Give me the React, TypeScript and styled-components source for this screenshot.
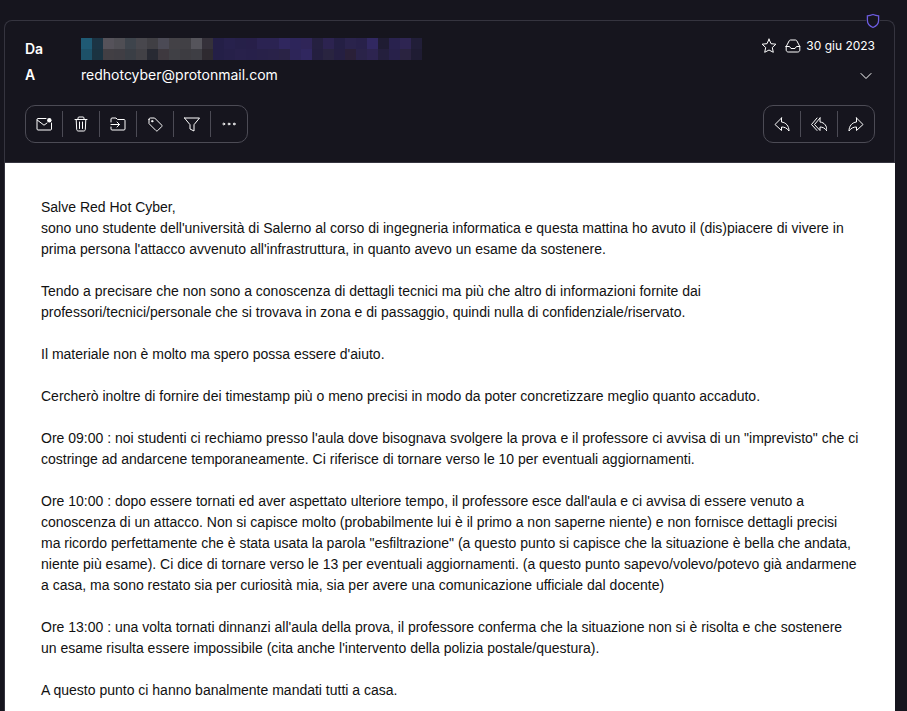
import React from "react";
import styled, { createGlobalStyle } from "styled-components";

const Global = createGlobalStyle`
  html, body { margin: 0; padding: 0; background: #16151e; height: 711px; overflow: hidden; }
  * { box-sizing: border-box; }
`;

const Page = styled.div`
  width: 907px;
  height: 711px;
  overflow: hidden;
  padding: 20px 12px 0 4px;
  background: #16151e;
  font-family: Inter, "Liberation Sans", sans-serif;
`;

const Card = styled.div`
  position: relative;
  width: 891px;
  height: 700px;
  border: 1px solid #35343f;
  border-bottom: 0;
  border-radius: 8px 8px 0 0;
`;

const ShieldBadge = styled.svg`
  position: absolute;
  top: -8px;
  right: 14px;
  width: 14px;
  height: 16px;
  background: #16151e;
`;

const Header = styled.header`
  height: 142px;
  padding: 17px 19px 0 20px;
  border-bottom: 1px solid #35343f;
  color: #fff;
`;

const Row = styled.div<{ $h: number }>`
  display: flex;
  align-items: center;
  height: ${(p) => p.$h}px;
`;

const Label = styled.span<{ $raise?: boolean }>`
  width: 56px;
  color: #fff;
  font-size: 14px;
  font-weight: 600;
  padding-bottom: ${(p) => (p.$raise ? 2 : 0)}px;
`;

const Value = styled.span`
  flex: 1;
  color: #fff;
  font-size: 14px;
`;

const Meta = styled.div`
  display: flex;
  align-items: center;
  gap: 8px;
  color: #fff;
  font-size: 12px;
  font-weight: 400;
  margin-bottom: 7px;
`;

const DateGroup = styled.span`
  display: flex;
  align-items: center;
  gap: 5px;
`;

const Toolbar = styled.div`
  display: flex;
  justify-content: space-between;
  margin-top: 16px;
`;

const Group = styled.div`
  display: flex;
  align-items: center;
  height: 38px;
  border: 1px solid #4c4b55;
  border-radius: 10px;
`;

const ToolButton = styled.button`
  display: flex;
  align-items: center;
  justify-content: center;
  width: 37px;
  height: 26px;
  padding: 0;
  background: none;
  border: 0;
  border-left: 1px solid #4c4b55;
  color: #fff;
  &:first-child { border-left: 0; width: 36px; }
`;

const Body = styled.main`
  height: 560px;
  margin-right: -1px;
  background: #fff;
  padding: 34px 28px 0 36px;
  color: #111;
  font-family: "Liberation Sans", Arial, sans-serif;
  font-size: 14px;
  line-height: 21px;
`;

const Para = styled.p`
  margin: 0 0 21px;
  white-space: nowrap;
`;

const Ico = styled.svg.attrs({
  viewBox: "0 0 16 16",
  fill: "none",
  stroke: "currentColor",
  strokeWidth: 1,
  strokeLinejoin: "round",
  strokeLinecap: "round",
})`
  width: 16px;
  height: 16px;
  display: block;
  flex: none;
`;

const mosaic = [
  ["#1f5a74","#1c3444","#55525a","#4f4e54","#3e444c","#48474d","#403f44","#4b4a55","#434146","#414045","#55545b","#35313a","#241f47","#27214c","#262049","#271f49","#2b2352","#2b2352","#30275e","#2d255a","#2f2558","#252040","#2c2350","#241f44","#2a234c","#28214a","#312861","#1f1c33","#29224e","#2e2552","#211e38"],
  ["#1d5168","#1b3341","#423f44","#403e44","#3a3e45","#424146","#282a33","#3e393f","#404045","#3d3c41","#3e3e44","#2e2a30","#241f47","#262049","#28214b","#27204a","#282149","#292249","#2a2346","#2d2558","#30275f","#241f3f","#292440","#251f42","#2a2038","#2a2349","#2d2450","#241f3d","#28214a","#2a2340","#1f1c33"],
];

const Mosaic = styled.svg`
  display: block;
  width: 341px;
  height: 22px;
`;

export default function App() {
  return (
    <Page>
      <Global />
      <Card>
        <ShieldBadge viewBox="0 0 14 16" fill="none" stroke="#6d5ce0" strokeWidth="1.3">
          <path d="M7 1.5C9 2.3 10.8 2.7 12.6 2.8V7.6C12.6 10.8 10.5 13.1 7 14.5 3.5 13.1 1.4 10.8 1.4 7.6V2.8C3.2 2.7 5 2.3 7 1.5Z" />
        </ShieldBadge>
        <Header>
          <Row $h={22}>
            <Label $raise>Da</Label>
            <Value>
              <Mosaic viewBox="0 0 341 22" shapeRendering="crispEdges">
                {mosaic.map((r, y) =>
                  r.map((c, x) => <rect key={`${x}-${y}`} x={x * 11} y={y * 11} width="11" height="11" fill={c} />)
                )}
              </Mosaic>
            </Value>
            <Meta>
              <Ico>
                <path d="M8 1.2l2 4.5 4.9.5-3.6 3.3 1 4.8L8 12l-4.3 2.3 1-4.8L1.1 6.2 6 5.7 8 1.2z" />
              </Ico>
              <DateGroup>
                <Ico>
                  <path d="M1.2 8.5V12C1.2 13.1 2.1 14 3.2 14H12.8C13.9 14 14.8 13.1 14.8 12V8.5L11.8 2.8C11.6 2.4 11.2 2 10.5 2H5.5C4.8 2 4.4 2.4 4.2 2.8L1.2 8.5Z" />
                  <path d="M1.2 8.5H4.5L6 10.5H10L11.5 8.5H14.8" />
                </Ico>
                30 giu 2023
              </DateGroup>
            </Meta>
          </Row>
          <Row $h={29}>
            <Label>A</Label>
            <Value>redhotcyber@protonmail.com</Value>
            <Ico>
              <path d="M2 6.5L7 11.5 12 6.5" />
            </Ico>
          </Row>
          <Toolbar>
            <Group>
              <ToolButton>
                <Ico>
                  <path d="M10 2.5H2C1.4 2.5 1 2.9 1 3.5V13C1 13.6 1.4 14 2 14H14.5C15.1 14 15.5 13.6 15.5 13V7" />
                  <path d="M1.2 4L8 9.2 11 7" />
                  <circle cx="13.3" cy="4.2" r="2.2" fill="currentColor" stroke="none" />
                </Ico>
              </ToolButton>
              <ToolButton>
                <Ico>
                  <path d="M2 3.5H14M5 3.5V2C5 1.4 5.4 1 6 1H10C10.6 1 11 1.4 11 2V3.5M3.2 3.5L3.7 13.5C3.8 14.4 4.4 15 5.2 15H10.8C11.6 15 12.2 14.4 12.3 13.5L12.8 3.5M6.5 6V12.5M9.5 6V12.5" />
                </Ico>
              </ToolButton>
              <ToolButton>
                <Ico>
                  <path d="M1 6V3C1 2.4 1.4 2 2 2H6L7.5 3.5H14C14.6 3.5 15 3.9 15 4.5V13C15 13.6 14.6 14 14 14H2C1.4 14 1 13.6 1 13V11" />
                  <path d="M1 8.5H9.5M7 6L9.5 8.5 7 11" />
                </Ico>
              </ToolButton>
              <ToolButton>
                <Ico>
                  <path d="M2 3.3C2 2.6 2.6 2 3.3 2H7.6L14.6 9C15.1 9.5 15.1 10.2 14.6 10.7L10.7 14.6C10.2 15.1 9.5 15.1 9 14.6L2 7.6V3.3Z" />
                  <circle cx="5.2" cy="5.2" r=".7" fill="currentColor" />
                </Ico>
              </ToolButton>
              <ToolButton>
                <Ico>
                  <path d="M.5 2H15.5L10 8.7V15L6 13V8.7L.5 2Z" />
                </Ico>
              </ToolButton>
              <ToolButton>
                <Ico stroke="none" fill="currentColor">
                  <circle cx="2.8" cy="8" r=".9" />
                  <circle cx="8" cy="8" r=".9" />
                  <circle cx="13.2" cy="8" r=".9" />
                </Ico>
              </ToolButton>
            </Group>
            <Group>
              <ToolButton>
                <Ico>
                  <path d="M7.5 2L1 8.5 7.5 14.5V11C10.5 11 13 12 15 15 15 10 12 6.5 7.5 6V2Z" />
                </Ico>
              </ToolButton>
              <ToolButton>
                <Ico>
                  <path d="M9 2L3.5 8.5 9 14.5V11C11.5 11 14 12 16 15 16 10 13.5 6.5 9 6V2Z" />
                  <path d="M6 2L.5 8.5 6 14.5" />
                </Ico>
              </ToolButton>
              <ToolButton>
                <Ico>
                  <path d="M8.5 2L15 8.5 8.5 14.5V11C5.5 11 3 12 1 15 1 10 4 6.5 8.5 6V2Z" />
                </Ico>
              </ToolButton>
            </Group>
          </Toolbar>
        </Header>
        <Body>
          <Para>
            Salve Red Hot Cyber,<br />
            sono uno studente dell'università di Salerno al corso di ingegneria informatica e questa mattina ho avuto il (dis)piacere di vivere in<br />
            prima persona l'attacco avvenuto all'infrastruttura, in quanto avevo un esame da sostenere.
          </Para>
          <Para>
            Tendo a precisare che non sono a conoscenza di dettagli tecnici ma più che altro di informazioni fornite dai<br />
            professori/tecnici/personale che si trovava in zona e di passaggio, quindi nulla di confidenziale/riservato.
          </Para>
          <Para>Il materiale non è molto ma spero possa essere d'aiuto.</Para>
          <Para>Cercherò inoltre di fornire dei timestamp più o meno precisi in modo da poter concretizzare meglio quanto accaduto.</Para>
          <Para>
            Ore 09:00 : noi studenti ci rechiamo presso l'aula dove bisognava svolgere la prova e il professore ci avvisa di un "imprevisto" che ci<br />
            costringe ad andarcene temporaneamente. Ci riferisce di tornare verso le 10 per eventuali aggiornamenti.
          </Para>
          <Para>
            Ore 10:00 : dopo essere tornati ed aver aspettato ulteriore tempo, il professore esce dall'aula e ci avvisa di essere venuto a<br />
            conoscenza di un attacco. Non si capisce molto (probabilmente lui è il primo a non saperne niente) e non fornisce dettagli precisi<br />
            ma ricordo perfettamente che è stata usata la parola "esfiltrazione" (a questo punto si capisce che la situazione è bella che andata,<br />
            niente più esame). Ci dice di tornare verso le 13 per eventuali aggiornamenti. (a questo punto sapevo/volevo/potevo già andarmene<br />
            a casa, ma sono restato sia per curiosità mia, sia per avere una comunicazione ufficiale dal docente)
          </Para>
          <Para>
            Ore 13:00 : una volta tornati dinnanzi all'aula della prova, il professore conferma che la situazione non si è risolta e che sostenere<br />
            un esame risulta essere impossibile (cita anche l'intervento della polizia postale/questura).
          </Para>
          <Para>A questo punto ci hanno banalmente mandati tutti a casa.</Para>
        </Body>
      </Card>
    </Page>
  );
}
